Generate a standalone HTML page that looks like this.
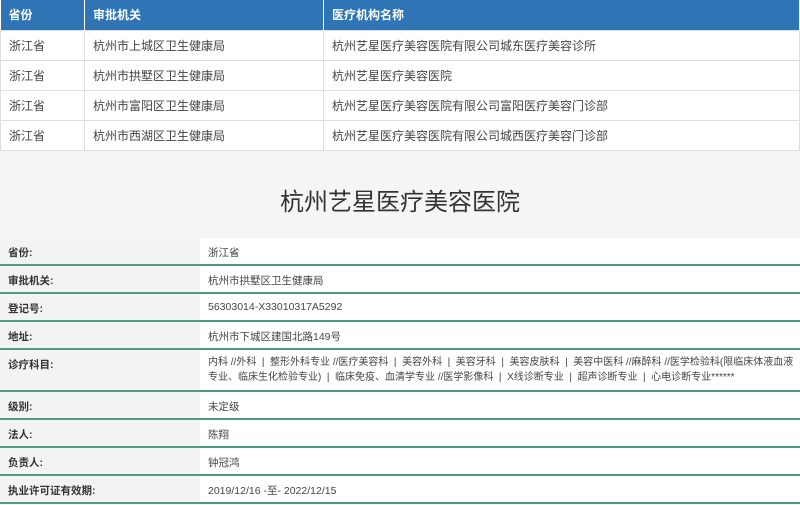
<!DOCTYPE html>
<html><head><meta charset="utf-8"><style>
*{margin:0;padding:0;box-sizing:border-box}
body{width:800px;height:505px;overflow:hidden;background:#f5f5f5;font-family:"Liberation Sans","Noto Sans CJK SC",sans-serif;color:#333}
table{border-collapse:collapse}
.t1{position:absolute;left:0;top:0;width:800px;background:#fff}
.t1 th{background:#2f74b5;color:#fff;font-size:12px;font-weight:bold;text-align:left;height:30px;padding-left:8px;border-right:1px solid #fff}
.t1 td{height:30px;font-size:12px;padding-left:8px;border:1px solid #ddd;color:#444}
.title{position:absolute;top:182px;left:0;width:800px;text-align:center;font-size:24px;color:#333}
.rows{position:absolute;top:238px;left:0;width:800px}
.r{display:flex;height:28px;border-bottom:2px solid #4f9a80}
.r .l{width:200px;background:#f3f3f3;font-size:10.5px;font-weight:bold;padding:7px 0 0 8px;color:#333}
.r .v{flex:1;background:#fff;font-size:10.5px;padding:7px 0 0 8px;color:#444}
.r.tall{height:42px}
.r.tall .v{font-size:10px;line-height:15px;padding-top:5px;white-space:nowrap;overflow:hidden}
</style></head><body>
<table class="t1">
<tr><th style="width:84px">省份</th><th style="width:239px">审批机关</th><th>医疗机构名称</th></tr>
<tr><td>浙江省</td><td>杭州市上城区卫生健康局</td><td>杭州艺星医疗美容医院有限公司城东医疗美容诊所</td></tr>
<tr><td>浙江省</td><td>杭州市拱墅区卫生健康局</td><td>杭州艺星医疗美容医院</td></tr>
<tr><td>浙江省</td><td>杭州市富阳区卫生健康局</td><td>杭州艺星医疗美容医院有限公司富阳医疗美容门诊部</td></tr>
<tr><td>浙江省</td><td>杭州市西湖区卫生健康局</td><td>杭州艺星医疗美容医院有限公司城西医疗美容门诊部</td></tr>
</table>
<div class="title">杭州艺星医疗美容医院</div>
<div class="rows">
<div class="r"><div class="l">省份:</div><div class="v">浙江省</div></div>
<div class="r"><div class="l">审批机关:</div><div class="v">杭州市拱墅区卫生健康局</div></div>
<div class="r"><div class="l">登记号:</div><div class="v">56303014-X33010317A5292</div></div>
<div class="r"><div class="l">地址:</div><div class="v">杭州市下城区建国北路149号</div></div>
<div class="r tall"><div class="l">诊疗科目:</div><div class="v">内科 //外科 &nbsp;| &nbsp;整形外科专业 //医疗美容科 &nbsp;| &nbsp;美容外科 &nbsp;| &nbsp;美容牙科 &nbsp;| &nbsp;美容皮肤科 &nbsp;| &nbsp;美容中医科 //麻醉科 //医学检验科(限临床体液血液<br>专业、临床生化检验专业) &nbsp;| &nbsp;临床免疫、血清学专业 //医学影像科 &nbsp;| &nbsp;X线诊断专业 &nbsp;| &nbsp;超声诊断专业 &nbsp;| &nbsp;心电诊断专业******</div></div>
<div class="r"><div class="l">级别:</div><div class="v">未定级</div></div>
<div class="r"><div class="l">法人:</div><div class="v">陈翔</div></div>
<div class="r"><div class="l">负责人:</div><div class="v">钟冠鸿</div></div>
<div class="r"><div class="l">执业许可证有效期:</div><div class="v">2019/12/16 -至- 2022/12/15</div></div>
</div>
</body></html>
